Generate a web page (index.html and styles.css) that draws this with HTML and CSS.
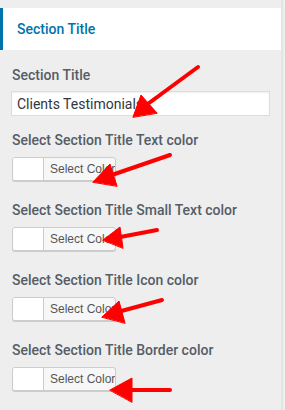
FILE: index.html
```html
<!DOCTYPE html>
<html lang="en">
<head>
    <meta charset="UTF-8">
    <meta name="viewport" content="width=device-width, initial-scale=1.0">
    <title>Section Title</title>
    <link rel="stylesheet" href="styles.css">
</head>
<body>
<div class="panel">
    <div class="section-header">Section Title</div>

    <div class="controls">
        <div class="control control-text">
            <label for="sectionTitle">Section Title</label>
            <input type="text" id="sectionTitle" value="Clients Testimonials">
        </div>
        <div class="control">
            <label>Select Section Title Text color</label>
            <button type="button" class="color-button"><span class="swatch"></span><span class="color-text">Select Color</span></button>
        </div>
        <div class="control">
            <label>Select Section Title Small Text color</label>
            <button type="button" class="color-button"><span class="swatch"></span><span class="color-text">Select Color</span></button>
        </div>
        <div class="control">
            <label>Select Section Title Icon color</label>
            <button type="button" class="color-button"><span class="swatch"></span><span class="color-text">Select Color</span></button>
        </div>
        <div class="control">
            <label>Select Section Title Border color</label>
            <button type="button" class="color-button"><span class="swatch"></span><span class="color-text">Select Color</span></button>
        </div>
    </div>

    <!-- annotation arrows -->
    <svg class="arrows" width="285" height="410" viewBox="0 0 285 410">
        <g stroke="#f00" stroke-width="4" stroke-linecap="round" fill="#f00">
            <line x1="198" y1="67" x2="145" y2="106"/>
            <polygon points="133,117 141,95 157,113" stroke-width="1"/>
            <line x1="170" y1="155" x2="106" y2="177"/>
            <polygon points="93,182 110,164 117,186" stroke-width="1"/>
            <line x1="157" y1="230" x2="115" y2="238"/>
            <polygon points="103,240 120,227 123,248" stroke-width="1"/>
            <line x1="162" y1="300" x2="114" y2="313"/>
            <polygon points="102,317 119,301 125,323" stroke-width="1"/>
            <line x1="170" y1="390" x2="125" y2="390"/>
            <polygon points="110,390 132,378 132,402" stroke-width="1"/>
        </g>
    </svg>
</div>
</body>
</html>
```

FILE: styles.css
```css
/* customizer panel */
body {
    font-family: Roboto, "Noto Sans", Arial, sans-serif;
    background-color: #eee;
    margin: 0;
    padding: 0;
}
.panel {
    position: relative;
    width: 283px;
    height: 410px;
    padding-top: 8px;
    box-sizing: border-box;
    border-right: 2px solid #e4e4e4;
}
.section-header {
    display: flex;
    align-items: center;
    height: 42px;
    padding-left: 14px;
    background-color: #fff;
    border-left: 3px solid #0073aa;
    color: #0073aa;
    font-size: 14px;
    font-weight: 500;
}
.controls {
    padding: 15px 0 0 11px;
}
.control {
    margin-bottom: 19px;
}
.control label {
    display: block;
    padding-left: 1px;
    margin-bottom: 7px;
    font-size: 14px;
    font-weight: 500;
    line-height: 20px;
    color: #555d66;
}
.control-text {
    margin-bottom: 14px;
}
.control-text label {
    margin-bottom: 6px;
}
.control-text input[type="text"] {
    display: block;
    width: 259px;
    height: 25px;
    padding: 0 5px;
    margin: 0;
    border: 1px solid #ddd;
    box-sizing: border-box;
    background-color: #fff;
    box-shadow: inset 0 1px 2px rgba(0, 0, 0, 0.07);
    font-family: inherit;
    font-size: 14px;
    color: #32373c;
}
.color-button {
    display: flex;
    width: 104px;
    height: 24px;
    padding: 0;
    margin: 0 0 0 1px;
    border: 1px solid #ccc;
    border-radius: 3px;
    box-sizing: border-box;
    background-color: #f7f7f7;
    box-shadow: 0 1px 0 #ccc;
    overflow: hidden;
    cursor: pointer;
}
.color-button .swatch {
    flex: 0 0 30px;
    height: 100%;
    background-color: #fff;
    border-right: 1px solid #ccc;
}
.color-button .color-text {
    display: flex;
    align-items: center;
    flex: 1;
    height: 100%;
    padding-left: 6px;
    white-space: nowrap;
    font-family: inherit;
    font-size: 12px;
    color: #555;
}
.arrows {
    position: absolute;
    left: 0;
    top: 0;
    pointer-events: none;
}
```
